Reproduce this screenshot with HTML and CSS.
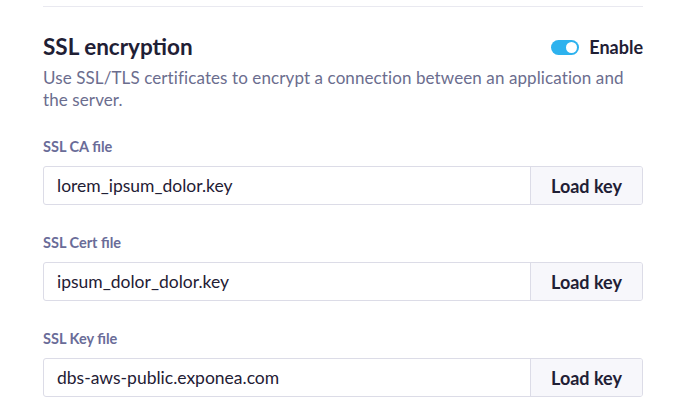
FILE: index.html
```html
<!DOCTYPE html>
<html lang="en">
<head>
<meta charset="utf-8">
<title>SSL encryption</title>
<link rel="stylesheet" href="styles.css">
</head>
<body>
<div class="page">
  <div class="divider"></div>
  <section class="section">
    <div class="header">
      <h2 class="title">SSL encryption</h2>
      <label class="switch-wrap">
        <span class="switch"><span class="knob"></span></span>
        <span class="switch-label">Enable</span>
      </label>
    </div>
    <p class="desc">Use SSL/TLS certificates to encrypt a connection between an application and the server.</p>

    <div class="field">
      <div class="label">SSL CA file</div>
      <div class="input-group">
        <div class="input">lorem_ipsum_dolor.key</div>
        <div class="btn">Load key</div>
      </div>
    </div>

    <div class="field">
      <div class="label">SSL Cert file</div>
      <div class="input-group">
        <div class="input">ipsum_dolor_dolor.key</div>
        <div class="btn">Load key</div>
      </div>
    </div>

    <div class="field">
      <div class="label">SSL Key file</div>
      <div class="input-group">
        <div class="input">dbs-aws-public.exponea.com</div>
        <div class="btn">Load key</div>
      </div>
    </div>
  </section>
</div>
</body>
</html>
```

FILE: styles.css
```css
* { box-sizing: border-box; }
html, body { margin: 0; padding: 0; background: #ffffff; }
body {
  font-family: Lato, "Open Sans", sans-serif;
  color: #1f2035;
}
.page {
  width: 675px;
  padding: 6px 32px 0 43px;
}
.divider {
  height: 1px;
  background: #e9e9f0;
}
.section {
  padding-top: 27px;
}
.header {
  display: flex;
  align-items: center;
  justify-content: space-between;
}
.title {
  margin: 0;
  font-size: 22.5px;
  line-height: 26px;
  font-weight: 700;
  color: #1f2035;
}
.switch-wrap {
  display: flex;
  align-items: center;
  gap: 10px;
}
.switch {
  width: 28px;
  height: 15px;
  border-radius: 8px;
  background: #2db2ee;
  display: flex;
  align-items: center;
  justify-content: flex-end;
  padding: 0 2px;
}
.knob {
  width: 11px;
  height: 11px;
  border-radius: 50%;
  background: #ffffff;
}
.switch-label {
  font-size: 18px;
  font-weight: 700;
  color: #1f2035;
}
.desc {
  margin: 7px 0 0;
  font-size: 17px;
  letter-spacing: 0.1px;
  line-height: 22px;
  color: #6b6d8e;
}
.field {
  margin-top: 28px;
}
.field + .field {
  margin-top: 30px;
}
.label {
  font-size: 14.5px;
  line-height: 16px;
  font-weight: 700;
  color: #6a6c98;
}
.input-group {
  margin-top: 11px;
  display: flex;
  height: 39px;
  border: 1px solid #dcdce7;
  border-radius: 3px;
  overflow: hidden;
}
.input {
  flex: 1;
  display: flex;
  align-items: center;
  padding-left: 13px;
  font-size: 17.5px;
  color: #1f2035;
}
.btn {
  width: 112px;
  display: flex;
  align-items: center;
  justify-content: center;
  background: #f7f7fb;
  border-left: 1px solid #dcdce7;
  font-size: 18px;
  font-weight: 700;
  color: #1f2035;
}
```
